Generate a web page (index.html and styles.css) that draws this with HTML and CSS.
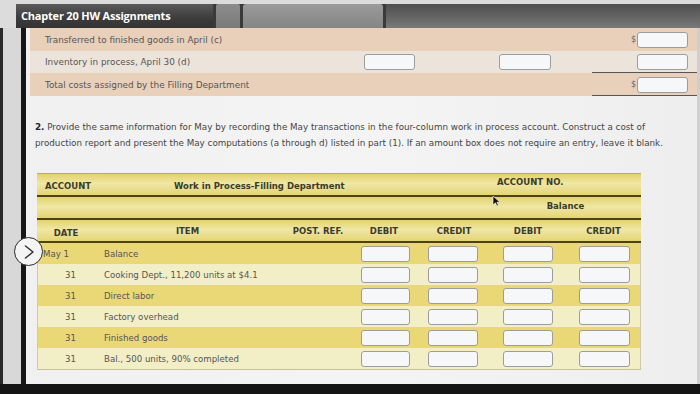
FILE: index.html
```html
<!DOCTYPE html>
<html>
<head>
<meta charset="utf-8">
<link rel="stylesheet" href="styles.css">
</head>
<body>
<div class="screen">
  <div class="topbar">
    <div class="title-tab">Chapter 20 HW Assignments</div>
    <div class="tab-sm"></div>
    <div class="tab-lg"></div>
    <div class="tab-rest"></div>
  </div>
  <div class="main">
    <div class="gutter"></div>
    <div class="rail"></div>
    <div class="panel">
      <div class="summary">
        <div class="srow peach">
          <span class="slabel">Transferred to finished goods in April (c)</span>
          <span class="dollar c6">$</span>
          <span class="box c7"></span>
        </div>
        <div class="srow pale">
          <span class="slabel">Inventory in process, April 30 (d)</span>
          <span class="box c2"></span>
          <span class="box c4"></span>
          <span class="box c7"></span>
          <span class="uline"></span>
        </div>
        <div class="srow peach">
          <span class="slabel">Total costs assigned by the Filling Department</span>
          <span class="dollar c6">$</span>
          <span class="box c7"></span>
          <span class="uline"></span>
        </div>
      </div>

      <p class="instr"><b>2.</b> Provide the same information for May by recording the May transactions in the four-column work in process account. Construct a cost of<br>production report and present the May computations (a through d) listed in part (1). If an amount box does not require an entry, leave it blank.</p>

      <div class="ledger">
        <div class="lrow head row-a">
          <span class="acct-label">ACCOUNT</span>
          <span class="acct-name">Work in Process-Filling Department</span>
          <span class="acct-no">ACCOUNT NO.</span>
        </div>
        <div class="lrow head row-b grid">
          <span class="bal">Balance</span>
        </div>
        <div class="lrow head row-c grid">
          <span>DATE</span><span>ITEM</span><span>POST. REF.</span><span>DEBIT</span><span>CREDIT</span><span>DEBIT</span><span>CREDIT</span>
        </div>
        <div class="body">
          <div class="lrow data dark grid">
            <span class="date first">May 1</span><span class="item">Balance</span><span></span>
            <span class="cell"><i class="box"></i></span><span class="cell"><i class="box"></i></span><span class="cell"><i class="box"></i></span><span class="cell"><i class="box"></i></span>
          </div>
          <div class="lrow data light grid">
            <span class="date">31</span><span class="item">Cooking Dept., 11,200 units at $4.1</span><span></span>
            <span class="cell"><i class="box"></i></span><span class="cell"><i class="box"></i></span><span class="cell"><i class="box"></i></span><span class="cell"><i class="box"></i></span>
          </div>
          <div class="lrow data dark grid">
            <span class="date">31</span><span class="item">Direct labor</span><span></span>
            <span class="cell"><i class="box"></i></span><span class="cell"><i class="box"></i></span><span class="cell"><i class="box"></i></span><span class="cell"><i class="box"></i></span>
          </div>
          <div class="lrow data light grid">
            <span class="date">31</span><span class="item">Factory overhead</span><span></span>
            <span class="cell"><i class="box"></i></span><span class="cell"><i class="box"></i></span><span class="cell"><i class="box"></i></span><span class="cell"><i class="box"></i></span>
          </div>
          <div class="lrow data dark grid">
            <span class="date">31</span><span class="item">Finished goods</span><span></span>
            <span class="cell"><i class="box"></i></span><span class="cell"><i class="box"></i></span><span class="cell"><i class="box"></i></span><span class="cell"><i class="box"></i></span>
          </div>
          <div class="lrow data light grid">
            <span class="date">31</span><span class="item">Bal., 500 units, 90% completed</span><span></span>
            <span class="cell"><i class="box"></i></span><span class="cell"><i class="box"></i></span><span class="cell"><i class="box"></i></span><span class="cell"><i class="box"></i></span>
          </div>
        </div>
      </div>
    </div>
    <div class="redge"></div>
  </div>
  <div class="bezel"></div>

  <div class="nav-circle">
    <svg width="16" height="16" viewBox="0 0 16 16"><path d="M4.5 2 L12 8 L4.5 14" fill="none" stroke="#333" stroke-width="1.5" stroke-linecap="round" stroke-linejoin="round"/></svg>
  </div>
  <svg class="cursor" width="9" height="12" viewBox="0 0 9 12"><path d="M1 1 L1 10 L3.4 7.8 L5 11 L6.4 10.3 L4.9 7.2 L8 7.2 Z" fill="#111" stroke="#fff" stroke-width="0.6"/></svg>
</div>
</body>
</html>
```

FILE: styles.css
```css
* { box-sizing: border-box; }
html, body { margin: 0; padding: 0; }
body {
  width: 700px;
  height: 394px;
  overflow: hidden;
  background: #dcdcdc;
  font-family: "DejaVu Sans", Verdana, sans-serif;
  color: #4a4a4a;
}
.screen {
  position: relative;
  width: 700px;
  height: 394px;
  display: flex;
  flex-direction: column;
}
.topbar {
  display: flex;
  height: 24px;
  margin-top: 4px;
  margin-left: 16px;
  background: #3a3a3a;
}
.title-tab {
  width: 197px;
  background: linear-gradient(#5a5a5a, #3c3c3c 60%, #333);
  color: #fff;
  font-family: "Open Sans", sans-serif;
  font-weight: 700;
  font-size: 11px;
  letter-spacing: -0.2px;
  line-height: 24px;
  padding-left: 5px;
}
.tab-sm {
  width: 24px;
  margin-left: 3px;
  background: linear-gradient(#8c8c8c, #7a7a7a);
  border-radius: 2px 2px 0 0;
}
.tab-lg {
  width: 140px;
  margin-left: 3px;
  background: linear-gradient(#9b9b9b, #858585);
  border-radius: 3px 3px 0 0;
}
.tab-rest {
  flex: 1;
  margin-left: 3px;
  background: linear-gradient(#4f4f4f, #6b6b6b 70%, #7a7a7a);
}
.main {
  flex: 1;
  display: flex;
}
.gutter { width: 21px; background: linear-gradient(90deg, #2a2a2a 0 3px, #d8d8d8 3px); }
.rail { width: 5px; background: #161616; }
.panel {
  flex: 1;
  background: linear-gradient(90deg, #f0f0f0, #f4f4f4 50%, #eeeeee);
  padding-left: 4px;
}
.redge { width: 3px; background: #cfcfcf; }
.bezel { height: 10px; background: #151515; }

/* summary rows */
.summary { display: flex; flex-direction: column; }
.srow {
  position: relative;
  height: 23px;
  display: grid;
  grid-template-columns: 334px 51px 84px 52px 80px 6px 51px 1fr;
  align-items: center;
  font-size: 8.85px;
  color: #555;
}
.srow.peach { background: #e9d0ba; }
.srow.pale { background: #ece4da; height: 22px; }
.slabel { grid-column: 1; grid-row: 1; padding-left: 15px; white-space: nowrap; }
.box {
  display: block;
  height: 16px;
  border: 1px solid #9c9c9c;
  border-radius: 3px;
  background: #f6f7f9;
}
.c2 { grid-column: 2; grid-row: 1; }
.c4 { grid-column: 4; grid-row: 1; }
.c6 { grid-column: 6; grid-row: 1; }
.c7 { grid-column: 7; grid-row: 1; }
.dollar { font-size: 8px; color: #666; }
.uline {
  position: absolute;
  left: 562px;
  right: 0;
  bottom: 0;
  height: 1px;
  background: #555;
}

/* instructions */
.instr {
  margin: 23px 0 0 5px;
  font-size: 8.75px;
  line-height: 16px;
  color: #444;
  white-space: nowrap;
}
.instr b { color: #222; }

/* ledger */
.ledger {
  width: 604px;
  margin: 22px 0 0 7px;
}
.grid {
  display: grid;
  grid-template-columns: 58px 185px 70px 68px 72px 76px 75px;
}
.lrow.head {
  background: linear-gradient(#e2d26c, #efe7a4 45%, #ece19a 60%, #e4d672);
  font-weight: 700;
  font-size: 8.5px;
  color: #3b3b2a;
  border-bottom: 2px solid #4d4214;
  align-items: center;
}
.row-a {
  display: flex;
  height: 24px;
  padding: 3px 0 0 8px;
  border-top: 1px solid #b9ad60;
}
.acct-label { width: 129px; }
.acct-name { width: 323px; }
.acct-no { margin-top: -8px; }
.row-b { height: 23px; }
.bal { grid-column: 6 / 8; text-align: center; margin-top: -4px; }
.row-c { height: 23px; }
.row-c span { text-align: center; }
.row-c span:nth-child(1) { margin-top: 4px; }
.row-c span:nth-child(3) { padding-left: 6px; }

.body {
  border-left: 1px solid #cfcba8;
  border-right: 1px solid #cfcba8;
  border-bottom: 1px solid #c5c1a0;
}
.lrow.data {
  height: 21px;
  align-items: center;
  font-size: 8.6px;
  color: #555;
}
.data.dark { background: #ead877; }
.data.light { background: #f2eec6; }
.date { padding-left: 27px; }
.date.first { padding-left: 5px; }
.item { padding-left: 8px; white-space: nowrap; }
.cell .box { height: 16px; width: 49px; }
.cell:nth-child(4) .box { margin-left: 10px; }
.cell:nth-child(5) .box { margin-left: 9px; width: 50px; }
.cell:nth-child(6) .box { margin-left: 12px; width: 50px; }
.cell:nth-child(7) .box { margin-left: 12px; width: 51px; }

/* overlays */
.nav-circle {
  position: absolute;
  left: 14px;
  top: 237px;
  width: 29px;
  height: 29px;
  border-radius: 50%;
  background: #f4f4f4;
  border: 1.5px solid #2a2a2a;
  display: flex;
  align-items: center;
  justify-content: center;
}
.cursor {
  position: absolute;
  left: 492px;
  top: 195px;
}
```
